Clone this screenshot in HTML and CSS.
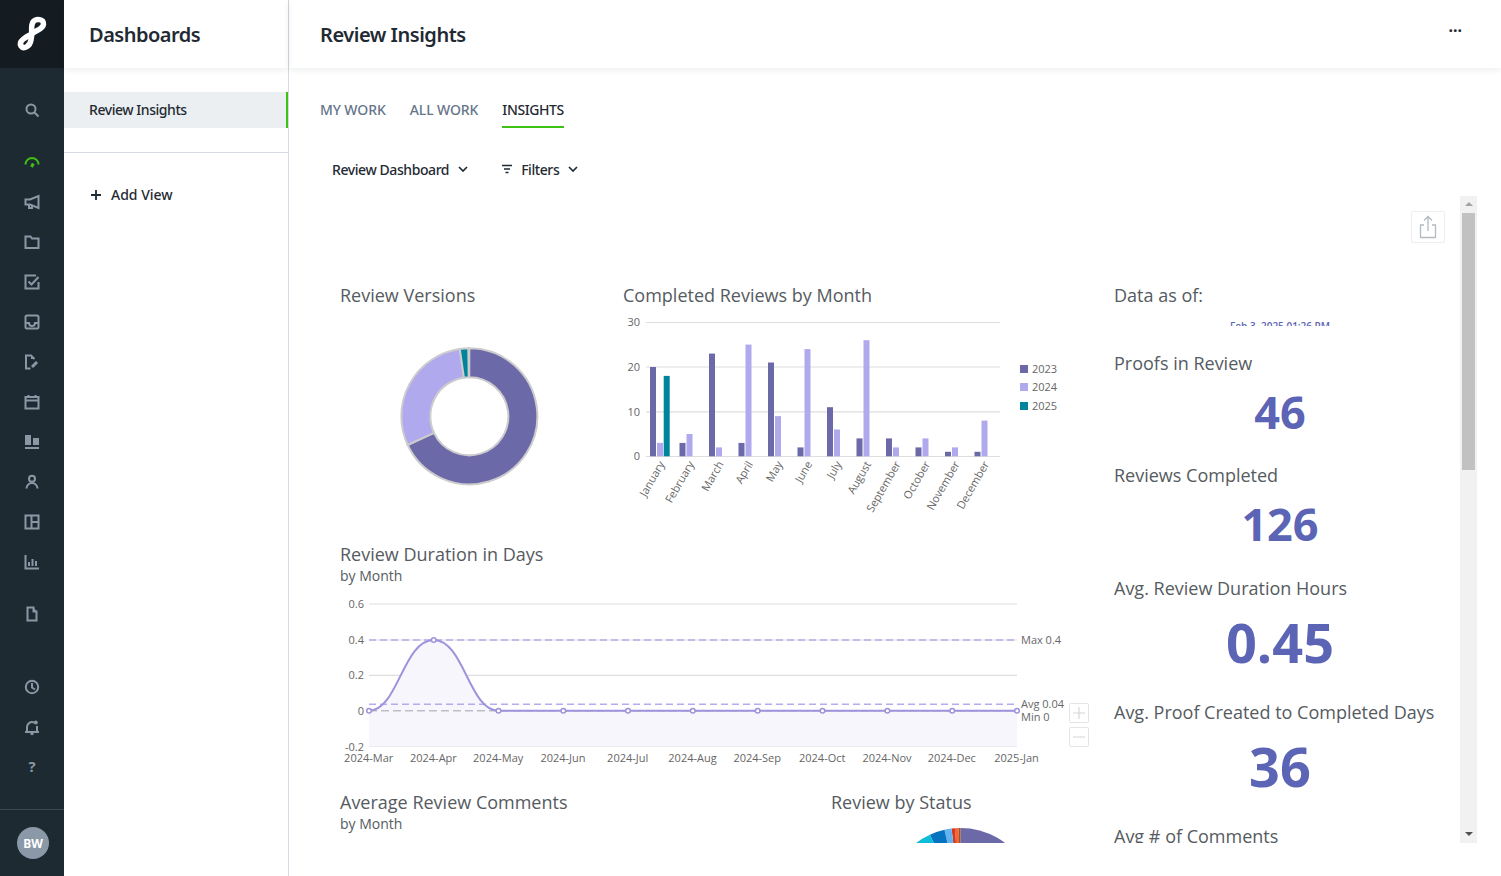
FILE: index.html
```html
<!DOCTYPE html>
<html lang="en">
<head>
<meta charset="utf-8">
<title>Review Insights</title>
<link rel="stylesheet" href="styles.css">
</head>
<body>
<div class="app">
  <nav class="rail">
    <div class="logo">
      <svg width="64" height="68" viewBox="0 0 64 68"><path class="logo-mark" d="M32 34C35 30 43 30 43.5 24C44 19 36 18 33 22C30 27 33 32 31 40C30 46 24 50 21 46C18 41 26 37 32 34Z"/></svg>
    </div>
    <div class="rail-group first">
      <a class="rail-btn"><svg class="ic" viewBox="0 0 16 16"><circle cx="7" cy="7" r="4.5"/><path d="M10.5 10.5L14.5 14.5"/></svg></a>
    </div>
    <div class="rail-group">
      <a class="rail-btn on"><svg class="ic" viewBox="0 0 16 16"><path d="M1.500 10.500A6.500 6.500 0 0 1 14.500 10.500"/><path class="thick" d="M7.500 13L9.300 9.500"/></svg></a>
      <a class="rail-btn"><svg class="ic" viewBox="0 0 16 16"><path d="M14.500 2V14L6 10.500H1.500V5.500H6Z"/><path d="M5 10.500V14H8V11.500"/></svg></a>
      <a class="rail-btn"><svg class="ic" viewBox="0 0 16 16"><path d="M1.500 2.500H6.500L8 4.500H14.500V14H1.500Z"/></svg></a>
      <a class="rail-btn"><svg class="ic" viewBox="0 0 16 16"><path d="M14.500 8V14.500H1.500V1.500H12"/><path d="M4.500 7.500L7.500 10.500L14.500 3"/></svg></a>
      <a class="rail-btn"><svg class="ic" viewBox="0 0 16 16"><rect x="1.500" y="1.500" width="13" height="13" rx="1.500"/><path d="M1.500 9H5A3 3 0 0 0 11 9H14.500"/></svg></a>
      <a class="rail-btn"><svg class="ic" viewBox="0 0 16 16"><path d="M6.500 14.500H2V1.500H7L10.500 5"/><path class="solid" d="M7 1.500L10.500 5H7Z"/><path class="thick" d="M8 13L13 8"/></svg></a>
      <a class="rail-btn"><svg class="ic" viewBox="0 0 16 16"><rect x="1.500" y="3" width="13" height="11.500"/><path d="M1.500 6.500H14.500M4.500 1V3.500M11.500 1V3.500"/></svg></a>
      <a class="rail-btn"><svg class="ic" viewBox="0 0 16 16"><rect class="solid" x="1" y="1" width="6" height="10"/><rect class="solid" x="9" y="4" width="6" height="7"/><path d="M1 14H15"/></svg></a>
      <a class="rail-btn"><svg class="ic" viewBox="0 0 16 16"><circle cx="8" cy="4.800" r="3"/><path d="M2.500 14.500A5.500 5.500 0 0 1 13.500 14.500"/></svg></a>
      <a class="rail-btn"><svg class="ic" viewBox="0 0 16 16"><rect x="1.500" y="1.500" width="13" height="13"/><path d="M7.500 1.500V14.500M7.500 8H14.500"/></svg></a>
      <a class="rail-btn"><svg class="ic" viewBox="0 0 16 16"><path d="M1.500 1V14.500H15M5 12V8M8.500 12V5M12 12V7"/></svg></a>
    </div>
    <div class="rail-group">
      <a class="rail-btn"><svg class="ic" viewBox="0 0 16 16"><path d="M3.500 1.500H9.500V5.500H12.500V14.500H3.500Z"/><path class="solid" d="M9.500 1.500L12.500 5H9.500Z"/></svg></a>
    </div>
    <div class="rail-group bottom">
      <a class="rail-btn"><svg class="ic" viewBox="0 0 16 16"><circle cx="8" cy="8" r="6.200"/><path d="M8 4V8.500L11 10.500"/></svg></a>
      <a class="rail-btn"><svg class="ic" viewBox="0 0 16 16"><path d="M3 12.500V8A5 5 0 0 1 10 3.500M13 7V12.500M1 13H15M6.500 15H9.500"/><circle class="solid" cx="11.800" cy="3.500" r="2"/></svg></a>
      <a class="rail-btn help">?</a>
    </div>
    <div class="rail-foot"><span class="avatar">BW</span></div>
  </nav>

  <aside class="side">
    <header class="side-head"><h1>Dashboards</h1></header>
    <div class="side-list"><a class="side-item">Review Insights</a></div>
    <a class="add-view"><span class="plus"><svg viewBox="0 0 12 12" width="12" height="12"><path d="M6 1V11M1 6H11"/></svg></span>Add View</a>
  </aside>

  <main class="main">
    <header class="main-head">
      <h2>Review Insights</h2>
      <span class="more">···</span>
    </header>
    <div class="tabs">
      <a class="tab">MY WORK</a>
      <a class="tab">ALL WORK</a>
      <a class="tab active">INSIGHTS</a>
    </div>
    <div class="tools">
      <a class="tool">Review Dashboard<svg class="chev" viewBox="0 0 10 6"><path d="M1 1L5 5L9 1"/></svg></a>
      <a class="tool"><svg class="filter" viewBox="0 0 12 10"><path d="M1 1.500H11M3 5H9M4.500 8.500H7.500"/></svg>Filters<svg class="chev" viewBox="0 0 10 6"><path d="M1 1L5 5L9 1"/></svg></a>
    </div>

    <section class="report">
      <div class="canvas">
        <button class="share"><svg viewBox="0 0 20 24" width="20" height="24"><path d="M6 10H2.500V22.500H17.500V10H14M10 16V2M6 5.500L10 1.500L14 5.500"/></svg></button>
        <div class="charts">
          <div class="row row-a">
            <div class="card">
              <h3>Review Versions</h3>
              <svg class="plot" width="283" height="235" viewBox="340 307 283 235">
                <path class="s23 ring" d="M469.300 348.300A68 68 0 1 1 407.700 445L434 432.800A39 39 0 1 0 469.300 377.300Z"/>
                <path class="s24 ring" d="M407.700 445A68 68 0 0 1 459.800 349L463.900 377.700A39 39 0 0 0 434 432.800Z"/>
                <path class="s25 ring" d="M459.800 349A68 68 0 0 1 468.300 348.300L468.700 377.300A39 39 0 0 0 463.900 377.700Z"/>
              </svg>
            </div>
            <div class="card">
              <h3>Completed Reviews by Month</h3>
              <svg class="plot" width="477" height="235" viewBox="623 307 477 235">
                <path class="grid" d="M646 322.500H1000M646 367H1000M646 411.800H1000M646 456.500H1000"/>
                <text class="t end" x="640" y="326">30</text>
                <text class="t end" x="640" y="371">20</text>
                <text class="t end" x="640" y="416">10</text>
                <text class="t end" x="640" y="460">0</text>
                <g class="s23">
                  <rect x="650" y="367" width="6" height="89.300"/>
                  <rect x="679.500" y="442.900" width="6" height="13.400"/>
                  <rect x="709" y="353.600" width="6" height="102.700"/>
                  <rect x="738.500" y="442.900" width="6" height="13.400"/>
                  <rect x="768" y="362.500" width="6" height="93.800"/>
                  <rect x="797.500" y="447.400" width="6" height="8.900"/>
                  <rect x="827" y="407.200" width="6" height="49.100"/>
                  <rect x="856.500" y="438.400" width="6" height="17.900"/>
                  <rect x="886" y="438.400" width="6" height="17.900"/>
                  <rect x="915.500" y="447.400" width="6" height="8.900"/>
                  <rect x="945" y="451.800" width="6" height="4.500"/>
                  <rect x="974.500" y="451.800" width="6" height="4.500"/>
                </g>
                <g class="s24">
                  <rect x="657" y="442.900" width="6" height="13.400"/>
                  <rect x="686.500" y="434" width="6" height="22.300"/>
                  <rect x="716" y="447.400" width="6" height="8.900"/>
                  <rect x="745.500" y="344.600" width="6" height="111.700"/>
                  <rect x="775" y="416.100" width="6" height="40.200"/>
                  <rect x="804.500" y="349.100" width="6" height="107.200"/>
                  <rect x="834" y="429.500" width="6" height="26.800"/>
                  <rect x="863.500" y="340.200" width="6" height="116.100"/>
                  <rect x="893" y="447.400" width="6" height="8.900"/>
                  <rect x="922.500" y="438.400" width="6" height="17.900"/>
                  <rect x="952" y="447.400" width="6" height="8.900"/>
                  <rect x="981.500" y="420.600" width="6" height="35.700"/>
                </g>
                <rect class="s25" x="663.700" y="375.900" width="6" height="80.400"/>
                <text class="t end" transform="rotate(-60 665 464)" x="665" y="464">January</text>
                <text class="t end" transform="rotate(-60 694.500 464)" x="694.500" y="464">February</text>
                <text class="t end" transform="rotate(-60 724 464)" x="724" y="464">March</text>
                <text class="t end" transform="rotate(-60 753.500 464)" x="753.500" y="464">April</text>
                <text class="t end" transform="rotate(-60 783 464)" x="783" y="464">May</text>
                <text class="t end" transform="rotate(-60 812.500 464)" x="812.500" y="464">June</text>
                <text class="t end" transform="rotate(-60 842 464)" x="842" y="464">July</text>
                <text class="t end" transform="rotate(-60 871.500 464)" x="871.500" y="464">August</text>
                <text class="t end" transform="rotate(-60 901 464)" x="901" y="464">September</text>
                <text class="t end" transform="rotate(-60 930.500 464)" x="930.500" y="464">October</text>
                <text class="t end" transform="rotate(-60 960 464)" x="960" y="464">November</text>
                <text class="t end" transform="rotate(-60 989.500 464)" x="989.500" y="464">December</text>
                <rect class="s23" x="1020" y="365" width="8" height="8"/>
                <rect class="s24" x="1020" y="383" width="8" height="8"/>
                <rect class="s25" x="1020" y="402" width="8" height="8"/>
                <text class="t" x="1032" y="373">2023</text>
                <text class="t" x="1032" y="391">2024</text>
                <text class="t" x="1032" y="410">2025</text>
              </svg>
            </div>
          </div>

          <div class="card">
            <h3>Review Duration in Days</h3>
            <p class="sub">by Month</p>
            <svg class="plot" width="760" height="204" viewBox="340 586 760 204">
              <path class="grid" d="M369 604H1017M369 640H1017M369 675.300H1017M369 746.500H1017"/>
              <path class="area" d="M369 710.700C398 710.700 403 640 433.700 640C464 640 469 710.700 498.500 710.700H1017V746.500H369Z"/>
              <path class="min-line" d="M369 710.700H1017"/>
              <path class="dash" d="M369 640H1017M369 704.300H1017"/>
              <path class="trend" d="M369 710.700C398 710.700 403 640 433.700 640C464 640 469 710.700 498.500 710.700H1017"/>
              <g class="dots">
                <circle cx="369" cy="710.700" r="2.300"/><circle cx="433.700" cy="640" r="2.300"/><circle cx="498.500" cy="710.700" r="2.300"/><circle cx="563.300" cy="710.700" r="2.300"/><circle cx="628" cy="710.700" r="2.300"/><circle cx="692.800" cy="710.700" r="2.300"/><circle cx="757.700" cy="710.700" r="2.300"/><circle cx="822.500" cy="710.700" r="2.300"/><circle cx="887.400" cy="710.700" r="2.300"/><circle cx="952.200" cy="710.700" r="2.300"/><circle cx="1017" cy="710.700" r="2.300"/>
              </g>
              <text class="t end" x="364" y="608">0.6</text>
              <text class="t end" x="364" y="644">0.4</text>
              <text class="t end" x="364" y="679">0.2</text>
              <text class="t end" x="364" y="715">0</text>
              <text class="t end" x="364" y="751">-0.2</text>
              <text class="t mid" x="368.700" y="762">2024-Mar</text>
              <text class="t mid" x="433.400" y="762">2024-Apr</text>
              <text class="t mid" x="498.200" y="762">2024-May</text>
              <text class="t mid" x="563" y="762">2024-Jun</text>
              <text class="t mid" x="627.700" y="762">2024-Jul</text>
              <text class="t mid" x="692.500" y="762">2024-Aug</text>
              <text class="t mid" x="757.200" y="762">2024-Sep</text>
              <text class="t mid" x="822.200" y="762">2024-Oct</text>
              <text class="t mid" x="887" y="762">2024-Nov</text>
              <text class="t mid" x="951.800" y="762">2024-Dec</text>
              <text class="t mid" x="1016.500" y="762">2025-Jan</text>
              <text class="t" x="1021" y="644">Max 0.4</text>
              <text class="t" x="1021" y="708">Avg 0.04</text>
              <text class="t" x="1021" y="721">Min 0</text>
              <rect class="zoom-box" x="1069.500" y="703.500" width="19" height="19" rx="1"/>
              <rect class="zoom-box" x="1069.500" y="727.500" width="19" height="19" rx="1"/>
              <path class="zoom-sign" d="M1073 713H1085M1079 707V719M1073 737H1085"/>
            </svg>
          </div>

          <div class="row row-c">
            <div class="card">
              <h3>Average Review Comments</h3>
              <p class="sub">by Month</p>
            </div>
            <div class="card">
              <h3>Review by Status</h3>
              <svg class="plot" width="229" height="100" viewBox="831 814 229 100">
                <path class="p-dark" d="M960.500 901.500L960.500 828A73.500 73.500 0 0 1 1024.200 864.800Z"/>
                <path class="p-brown" d="M960.500 901.500L958.700 828H960.500Z"/>
                <path class="p-orange" d="M960.500 901.500L954.900 828.200L958.700 828Z"/>
                <path class="p-red" d="M960.500 901.500L951.500 828.500L954.900 828.200Z"/>
                <path class="p-sky" d="M960.500 901.500L944.500 829.800A73.500 73.500 0 0 1 951.500 828.500Z"/>
                <path class="p-blue" d="M960.500 901.500L929.900 834.700A73.500 73.500 0 0 1 944.500 829.800Z"/>
                <path class="p-cyan" d="M960.500 901.500L904.200 854.300A73.500 73.500 0 0 1 929.900 834.700Z"/>
              </svg>
            </div>
          </div>
        </div>

        <div class="stats">
          <h3>Data as of:</h3>
          <div class="date-clip"><span>Feb 3, 2025 01:26 PM</span></div>
          <h3>Proofs in Review</h3>
          <div class="value">46</div>
          <h3>Reviews Completed</h3>
          <div class="value second">126</div>
          <h3>Avg. Review Duration Hours</h3>
          <div class="value big">0.45</div>
          <h3>Avg. Proof Created to Completed Days</h3>
          <div class="value big">36</div>
          <h3>Avg # of Comments</h3>
        </div>
      </div>
      <div class="scroll">
        <span class="arrow up"></span>
        <span class="thumb"></span>
        <span class="arrow down"></span>
      </div>
    </section>
  </main>
</div>
</body>
</html>
```
FILE: styles.css
```css
* { box-sizing: border-box; }
html, body { margin: 0; height: 100%; overflow: hidden; background: #fff; }
body { font-family: "Noto Sans", "Open Sans", sans-serif; color: #1f2a33; }
h1, h2, h3, p { margin: 0; }
a { color: inherit; text-decoration: none; }

.app { display: flex; height: 876px; }

/* rail */
.rail { width: 64px; flex: none; background: #1e2a32; color: #8a97a5; display: flex; flex-direction: column; }
.logo { height: 68px; background: #141c22; flex: none; }
.logo svg { display: block; }
.logo-mark { fill: none; stroke: #fff; stroke-width: 5.5; stroke-linejoin: round; }
.rail-group { display: flex; flex-direction: column; margin-top: 12px; }
.rail-group.first { margin-top: 22px; }
.rail-group.bottom { margin-top: auto; margin-bottom: 22px; }
.rail-btn { height: 40px; display: flex; align-items: center; justify-content: center; }
.rail-btn.on { color: #3cc114; }
.rail-btn.help { font-family: "Open Sans", sans-serif; font-size: 15px; font-weight: 700; padding-bottom: 2px; }
.ic { width: 16px; height: 16px; fill: none; stroke: currentColor; stroke-width: 2; display: block; }
.ic .solid { fill: currentColor; stroke: none; }
.ic .thick { stroke-width: 3; }
.rail-foot { height: 67px; flex: none; border-top: 1px solid #3a4750; display: flex; align-items: center; justify-content: center; padding-left: 2px; }
.avatar { width: 32px; height: 32px; border-radius: 50%; background: #8b98a7; color: #fff; font-size: 12px; font-weight: 700; display: flex; align-items: center; justify-content: center; }

/* side */
.side { width: 225px; flex: none; border-right: 1px solid #d6dbe5; display: flex; flex-direction: column; }
.side-head { height: 68px; flex: none; display: flex; align-items: center; padding-left: 25px; box-shadow: 0 2px 6px rgba(30, 42, 50, .08); }
.side-head h1 { font-size: 20px; font-weight: 600; letter-spacing: -.5px; }
.side-list { padding: 24px 0; border-bottom: 1px solid #d6dbe5; }
.side-item { display: flex; align-items: center; height: 36px; padding: 0 0 2px 25px; background: #eceff1; border-right: 2px solid #3cc114; font-size: 14px; font-weight: 500; letter-spacing: -.45px; }
.add-view { display: flex; align-items: center; margin-top: 30px; padding: 0 0 2px 25px; font-size: 14px; font-weight: 500; height: 24px; }
.plus { width: 22px; display: flex; padding-top: 2px; }
.plus svg { margin-left: 1px; fill: none; stroke: #1f2a33; stroke-width: 1.8; }

/* main */
.main { flex: 1; min-width: 0; display: flex; flex-direction: column; }
.main-head { height: 68px; flex: none; display: flex; align-items: center; justify-content: space-between; padding: 0 39px 0 31px; box-shadow: 0 2px 6px rgba(30, 42, 50, .08); }
.main-head h2 { font-size: 20px; font-weight: 600; letter-spacing: -.47px; }
.more { font-size: 16px; font-weight: 700; margin-bottom: 9px; }
.tabs { display: flex; gap: 24px; padding: 24px 0 0 31px; }
.tab { height: 36px; line-height: 36px; font-size: 14px; font-weight: 500; color: #66758a; border-bottom: 2px solid transparent; letter-spacing: -.1px; }
.tab.active { color: #1f2a33; border-bottom-color: #3cc114; letter-spacing: -.4px; }
.tools { display: flex; gap: 33px; padding: 29px 0 0 43px; height: 68px; }
.tool { display: flex; align-items: center; height: 24px; font-size: 14px; font-weight: 500; letter-spacing: -.42px; }
.chev { width: 10px; height: 6px; margin-left: 9px; fill: none; stroke: #1f2a33; stroke-width: 1.7; }
.filter { width: 12px; height: 10px; margin-right: 8px; fill: none; stroke: #1f2a33; stroke-width: 1.5; }

/* report */
.report { margin-left: 31px; width: 1157px; height: 647px; display: flex; flex: none; }
.canvas { position: relative; width: 1140px; height: 647px; overflow: hidden; display: flex; gap: 14px; padding: 87px 14px 0 20px; align-items: flex-start; font-family: "Open Sans", sans-serif; }
.share { position: absolute; top: 15px; right: 15px; width: 34px; height: 32px; padding: 0; background: #fff; border: 1px solid #eceef0; border-radius: 2px; display: flex; align-items: center; justify-content: center; }
.share svg { fill: none; stroke: #b4bac2; stroke-width: 1.3; }
.charts { width: 760px; flex: none; }
.row { display: grid; }
.row-a { grid-template-columns: 283px 477px; }
.row-c { grid-template-columns: 491px 269px; }
.card h3, .stats h3 { font-size: 18px; line-height: 24px; font-weight: 400; color: #555b61; white-space: nowrap; }
.sub { font-size: 14px; line-height: 20px; color: #555b61; }
.plot { display: block; }

.t { font: 11px "Open Sans", sans-serif; fill: #666; }
.t.end { text-anchor: end; }
.t.mid { text-anchor: middle; }
.grid { fill: none; stroke: #dedede; stroke-width: 1.2; }
.s23 { fill: #6c69a9; }
.s24 { fill: #b0a9ee; }
.s25 { fill: #00849b; }
.ring { stroke: #cccccc; stroke-width: 2; }
.area { fill: #f7f6fc; }
.min-line { fill: none; stroke: #bdbdc6; stroke-width: 1.6; stroke-dasharray: 8 4; }
.dash { fill: none; stroke: #b4acec; stroke-width: 1.4; stroke-dasharray: 7 4; }
.trend { fill: none; stroke: #9d93db; stroke-width: 2; }
.dots circle { fill: #fff; stroke: #9d93db; stroke-width: 1.5; }
.zoom-box { fill: #fff; stroke: #e4e4e4; }
.zoom-sign { fill: none; stroke: #d6d6d6; stroke-width: 1.2; }

.p-dark { fill: #6c69a9; }
.p-brown { fill: #8d5a1c; }
.p-orange { fill: #f4613a; }
.p-red { fill: #d23a1e; }
.p-sky { fill: #63b3f2; }
.p-blue { fill: #0673c0; }
.p-cyan { fill: #0fbcd8; }

/* stats */
.stats { width: 332px; flex: none; }
.date-clip { height: 5px; margin: 14px 0 25px; overflow: hidden; text-align: center; font-size: 10px; line-height: 14px; font-weight: 600; color: #5b64b5; }
.date-clip span { display: block; margin-top: -2px; }
.value { height: 74px; margin-bottom: 14px; line-height: 74px; text-align: center; font-size: 45px; font-weight: 700; color: #5b64b5; }
.value.second { margin-bottom: 15px; }
.value.big { height: 84px; margin-bottom: 16px; line-height: 84px; font-size: 54px; }

/* scrollbar */
.scroll { width: 17px; height: 647px; background: #f1f1f1; display: flex; flex-direction: column; align-items: center; padding: 0 2px; }
.thumb { width: 13px; height: 257px; background: #c1c1c1; flex: none; }
.arrow { width: 0; height: 0; border-left: 4px solid transparent; border-right: 4px solid transparent; flex: none; }
.arrow.up { border-bottom: 4px solid #a3a3a3; margin: 6px 0 7px; }
.arrow.down { border-top: 4px solid #505050; margin-top: auto; margin-bottom: 7px; }
```
